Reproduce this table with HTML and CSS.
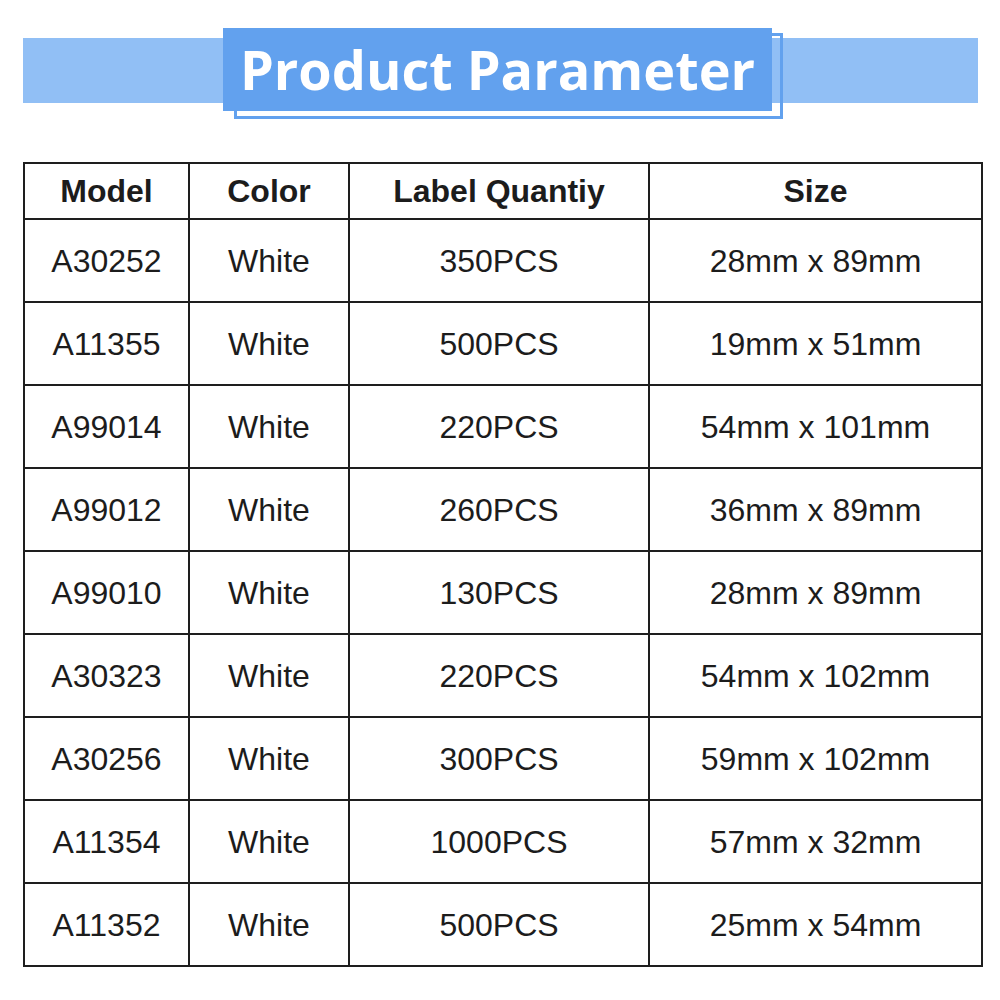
FILE: index.html
```html
<!DOCTYPE html>
<html>
<head>
<meta charset="utf-8">
<link rel="stylesheet" href="styles.css">
</head>
<body>
<div class="banner">
  <div class="band"></div>
  <div class="frame"></div>
  <h1 class="title">Product Parameter</h1>
</div>
<table class="params">
  <colgroup>
    <col class="c1"><col class="c2"><col class="c3"><col class="c4">
  </colgroup>
  <thead>
    <tr><th>Model</th><th>Color</th><th>Label Quantiy</th><th>Size</th></tr>
  </thead>
  <tbody>
    <tr><td>A30252</td><td>White</td><td>350PCS</td><td>28mm x 89mm</td></tr>
    <tr><td>A11355</td><td>White</td><td>500PCS</td><td>19mm x 51mm</td></tr>
    <tr><td>A99014</td><td>White</td><td>220PCS</td><td>54mm x 101mm</td></tr>
    <tr><td>A99012</td><td>White</td><td>260PCS</td><td>36mm x 89mm</td></tr>
    <tr><td>A99010</td><td>White</td><td>130PCS</td><td>28mm x 89mm</td></tr>
    <tr><td>A30323</td><td>White</td><td>220PCS</td><td>54mm x 102mm</td></tr>
    <tr><td>A30256</td><td>White</td><td>300PCS</td><td>59mm x 102mm</td></tr>
    <tr><td>A11354</td><td>White</td><td>1000PCS</td><td>57mm x 32mm</td></tr>
    <tr><td>A11352</td><td>White</td><td>500PCS</td><td>25mm x 54mm</td></tr>
  </tbody>
</table>
</body>
</html>
```

FILE: styles.css
```css
html, body {
  margin: 0;
  padding: 0;
  background: #ffffff;
}

body {
  width: 1000px;
  height: 1000px;
  overflow: hidden;
  font-family: "Liberation Sans", Arial, sans-serif;
  color: #1c1c1c;
}

.banner {
  display: grid;
  margin-top: 28px;
}

.band,
.frame,
.title {
  grid-area: 1 / 1;
  align-self: start;
  justify-self: start;
}

.band {
  justify-self: stretch;
  margin: 10px 22px 0 23px;
  height: 65px;
  background: #91bff5;
}

.frame {
  margin: 5px 0 0 234px;
  width: 549px;
  height: 86px;
  box-sizing: border-box;
  border: 3px solid #62a1ee;
}

.title {
  margin: 0 0 0 223px;
  width: 549px;
  height: 83px;
  background: #62a1ee;
  color: #ffffff;
  font-family: "Open Sans", "DejaVu Sans", sans-serif;
  font-weight: 700;
  font-size: 54px;
  line-height: 82px;
  text-align: center;
  letter-spacing: 0;
}

.params {
  margin: 43px 0 0 23px;
  width: 958px;
  border-collapse: collapse;
  table-layout: fixed;
}

.c1 { width: 165px; }
.c2 { width: 160px; }
.c3 { width: 300px; }
.c4 { width: 333px; }

.params th,
.params td {
  border: 2px solid #1e1e1e;
  padding: 0;
  text-align: center;
  vertical-align: middle;
  font-size: 32px;
}

.params th {
  font-weight: 700;
  height: 54px;
}

.params td {
  font-weight: 400;
  height: 79px;
  padding-top: 2px;
}
```
